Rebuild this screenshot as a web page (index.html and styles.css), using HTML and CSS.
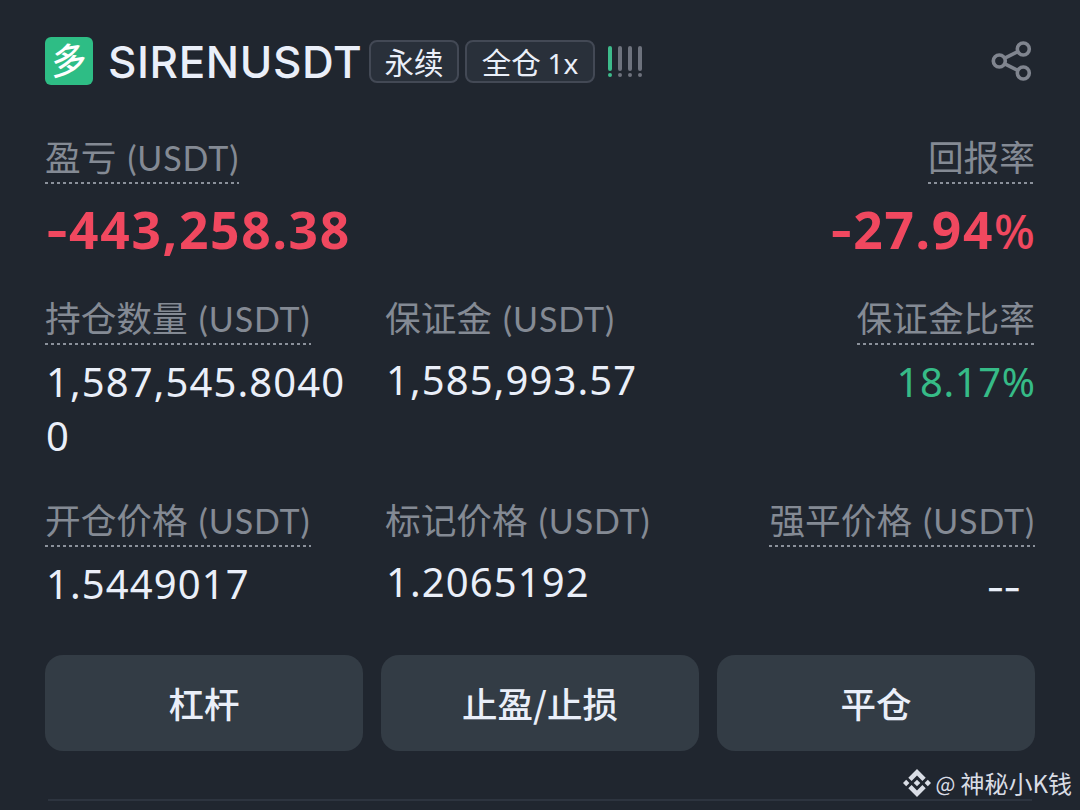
FILE: index.html
```html
<!DOCTYPE html>
<html lang="zh-CN">

<head>
  <meta charset="UTF-8">
  <meta name="viewport" content="width=device-width, initial-scale=1.0">
  <title>SIRENUSDT</title>
  <link rel="stylesheet" href="styles.css">
</head>

<body>
  <div class="position-card">
    <div class="header">
      <div class="side"><span class="side-text">多</span></div>
      <h1 class="symbol">SIRENUSDT</h1>
      <span class="tag">永续</span>
      <span class="tag tag-margin">全仓 <span class="lever">1x</span></span>
      <div class="risk">
        <i class="on"></i>
        <i></i>
        <i></i>
        <i></i>
      </div>
      <svg class="share" width="42" height="42" viewBox="0 0 42 42" fill="none" stroke="#80858f" stroke-width="3.6">
        <circle cx="8.3" cy="21" r="6" />
        <circle cx="32.3" cy="9" r="6" />
        <circle cx="32.3" cy="33" r="6" />
        <path d="M13.8 18.2L26.8 11.6M13.8 23.8L26.8 30.4" />
      </svg>
    </div>

    <div class="row row-pnl">
      <div class="cell">
        <div class="label dashed">盈亏 <span class="unit">(USDT)</span></div>
        <div class="pnl"><span class="minus">-</span>443,258.38</div>
      </div>
      <div class="cell right">
        <div class="label dashed">回报率</div>
        <div class="pnl roi"><span class="minus">-</span>27.94<span class="percent">%</span></div>
      </div>
    </div>

    <div class="row row-size">
      <div class="cell">
        <div class="label dashed">持仓数量 <span class="unit">(USDT)</span></div>
        <div class="value">1,587,545.8040<br>0</div>
      </div>
      <div class="cell">
        <div class="label">保证金 <span class="unit">(USDT)</span></div>
        <div class="value">1,585,993.57</div>
      </div>
      <div class="cell right">
        <div class="label dashed">保证金比率</div>
        <div class="value green">18.17<span class="percent">%</span></div>
      </div>
    </div>

    <div class="row row-price">
      <div class="cell">
        <div class="label dashed">开仓价格 <span class="unit">(USDT)</span></div>
        <div class="value">1.5449017</div>
      </div>
      <div class="cell">
        <div class="label">标记价格 <span class="unit">(USDT)</span></div>
        <div class="value">1.2065192</div>
      </div>
      <div class="cell right">
        <div class="label dashed">强平价格 <span class="unit">(USDT)</span></div>
        <div class="value empty">--</div>
      </div>
    </div>

    <div class="actions">
      <button class="btn">杠杆</button>
      <button class="btn">止盈/止损</button>
      <button class="btn">平仓</button>
    </div>
    <div class="divider"></div>
  </div>

  <div class="watermark">
    <svg width="28" height="28" viewBox="0 0 28 28" fill="#d9dde5">
      <path d="M14 0L22.7 8.7L19.4 12L14 6.6L8.6 12L5.3 8.7Z" />
      <path d="M14 28L22.7 19.3L19.4 16L14 21.4L8.6 16L5.3 19.3Z" />
      <path d="M14 10.7L17.3 14L14 17.3L10.7 14Z" />
      <path d="M3.2 10.8L6.4 14L3.2 17.2L0 14Z" />
      <path d="M24.8 10.8L28 14L24.8 17.2L21.6 14Z" />
    </svg>
    <span class="at">@</span>
    <span class="author">神秘小K钱</span>
  </div>
</body>

</html>
```
FILE: styles.css
```css
* {
  margin: 0;
  padding: 0;
  box-sizing: border-box;
}

body {
  width: 1080px;
  height: 810px;
  overflow: hidden;
  position: relative;
  background: #20262f;
  color: #eaeff9;
  font-family: 'Noto Sans', 'Noto Sans CJK SC', sans-serif;
}

.position-card {
  padding: 37px 45px 0;
}

.header {
  display: flex;
  align-items: center;
  height: 48px;
}

.side {
  width: 48px;
  height: 48px;
  border-radius: 6px;
  background: #2ebd85;
  color: #fff;
  font: 500 35px/42px 'Noto Sans CJK SC', sans-serif;
  text-align: center;
}

.side-text {
  display: block;
  transform: skewY(-9deg);
}

.symbol {
  width: 253px;
  margin-left: 15px;
  font: 500 44px/50px Inter, sans-serif;
  letter-spacing: 0.6px;
  white-space: nowrap;
  padding-top: 2px;
}

.tag {
  height: 43px;
  width: 90px;
  margin-left: 8px;
  border: 2px solid #434955;
  border-radius: 8px;
  background: #29303a;
  font: 400 29.5px/38px 'Noto Sans CJK SC', sans-serif;
  text-align: center;
  white-space: nowrap;
}

.tag-margin {
  width: 130px;
  margin-left: 6px;
}

.lever {
  font-family: 'Noto Sans', sans-serif;
  font-size: 28px;
}

.risk {
  display: flex;
  gap: 6px;
  margin-left: 13px;
}

.risk i {
  width: 4px;
}

.risk i::before,
.risk i::after {
  content: '';
  display: block;
  height: 25px;
  border-radius: 2px;
  background: #6d727d;
}

.risk i::after {
  height: 4px;
  margin-top: 2px;
}

.risk .on::before,
.risk .on::after {
  background: #3dbb8b;
}

.share {
  margin-left: auto;
  margin-right: 2px;
}

.row {
  display: grid;
  grid-template-columns: 340px 340px 310px;
}

.row-pnl {
  grid-template-columns: 1fr 1fr;
  padding-top: 49px;
  height: 210px;
}

.row-size {
  height: 202px;
}

.row-price {
  height: 158px;
}

.cell {
  display: flex;
  flex-direction: column;
  align-items: flex-start;
}

.right {
  align-items: flex-end;
}

.label {
  height: 48px;
  color: #848a94;
  font: 400 35.7px/44px 'Noto Sans CJK SC', sans-serif;
  white-space: nowrap;
}

.unit {
  margin-left: 3px;
  font-family: Lato, sans-serif;
  font-size: 34px;
  font-weight: 400;
  letter-spacing: 0.9px;
}

.dashed {
  height: 50px;
  background: repeating-linear-gradient(90deg, #8b919b 0, #8b919b 3px, transparent 3px, transparent 6px) left bottom / 100% 2px no-repeat;
}

.pnl {
  margin-top: 15px;
  color: #f0485f;
  font-size: 51.5px;
  font-weight: 700;
  line-height: 60px;
  letter-spacing: 1.7px;
}

.minus {
  font-family: Inter, sans-serif;
  letter-spacing: 0;
}

.value {
  margin-top: 10px;
  padding-left: 1px;
  font-size: 40px;
  line-height: 54px;
  letter-spacing: 1.1px;
}

.percent {
  font-weight: 400;
  letter-spacing: 0;
}

.roi .percent {
  font-weight: 500;
  font-size: 48px;
}

.green {
  color: #36bb87;
  letter-spacing: 0.6px;
}

.empty {
  margin-right: 15px;
  padding-top: 4px;
  font-family: Inter, sans-serif;
  letter-spacing: -1.5px;
}

.actions {
  display: grid;
  grid-template-columns: repeat(3, 1fr);
  gap: 18px;
}

.btn {
  height: 96px;
  border: none;
  border-radius: 18px;
  background: #333c45;
  color: #eaeff9;
  font: 500 35.5px/94px 'Noto Sans CJK SC', sans-serif;
}

.divider {
  height: 2px;
  margin: 48px 3px 0;
  background: #2d343f;
}

.watermark {
  position: absolute;
  right: 8px;
  bottom: 10px;
  display: flex;
  align-items: center;
  height: 34px;
  color: #d9dde5;
  font: 400 24px/34px 'Noto Sans CJK SC', sans-serif;
}

.at {
  margin: 0 5px;
  font-size: 21px;
}
```
